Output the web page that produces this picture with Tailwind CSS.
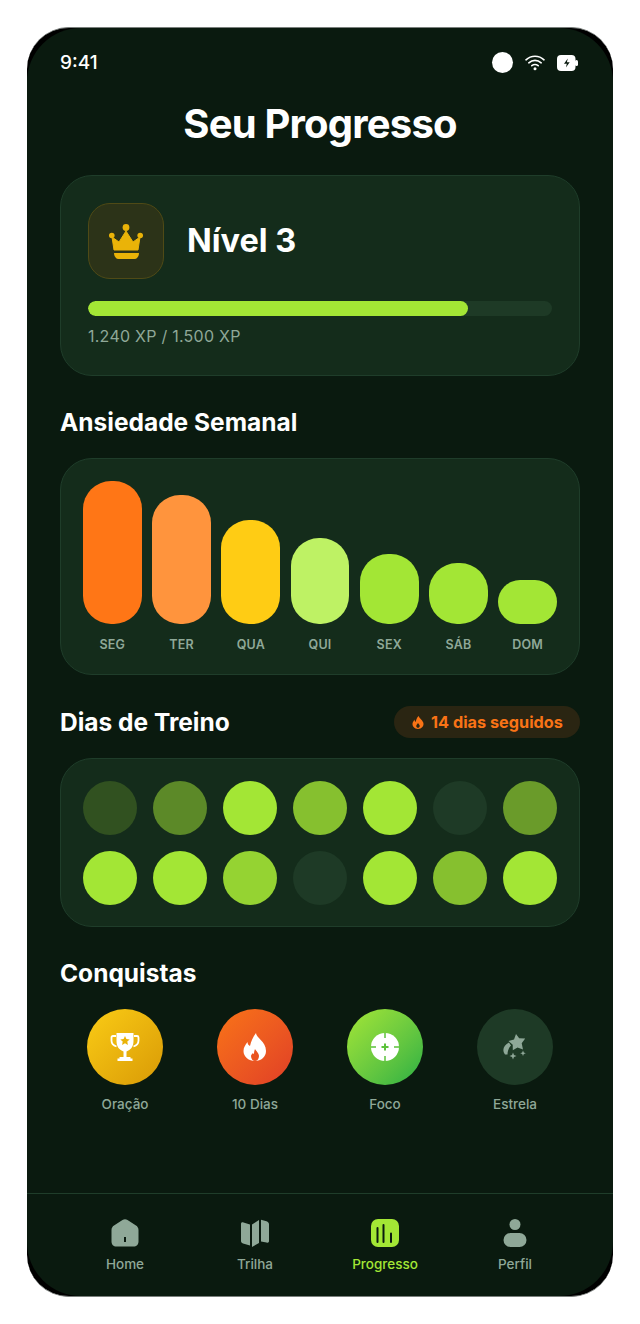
<!DOCTYPE html>
<html lang="pt">
<head>
<meta charset="utf-8">
<script src="https://cdn.jsdelivr.net/npm/@tailwindcss/browser@4"></script>
</head>
<body class="bg-white font-['Inter','Noto_Sans',sans-serif]">
<div class="w-[640px] h-[1324px] p-[27px] bg-white">
  <div class="w-[586px] h-[1270px] bg-black rounded-[42px] overflow-hidden border-y border-[#7a7f7c]">
    <div class="w-[586px] h-[1268px] bg-[#0a1a0f] rounded-[54px] overflow-hidden flex flex-col text-white">

      <div class="h-[69px] pl-[33px] pr-[35px] pt-[23px] flex justify-between items-start">
        <span class="text-[19px] leading-[23px] font-medium">9:41</span>
        <div class="flex items-center gap-[12px] pt-[1px]">
          <div class="w-[21px] h-[21px] rounded-full bg-white"></div>
          <svg class="w-[20px] h-[17px]" viewBox="0 0 20 17" fill="none" stroke="#fff" stroke-width="1.600" stroke-linecap="round"><path d="M1 5.800C6 1 14 1 19 5.800"/><path d="M3.800 8.800C7.500 5.500 12.500 5.500 16.200 8.800"/><path d="M6.800 11.700C8.800 10.200 11.200 10.200 13.200 11.700"/><circle cx="10" cy="14.800" r="1.500" fill="#fff" stroke="none"/></svg>
          <svg class="w-[21px] h-[16px]" viewBox="0 0 21 16"><rect x="0" y="0" width="18.500" height="16" rx="4" fill="#fff"/><rect x="18" y="5" width="3" height="6" rx="1.500" fill="#fff"/><path d="M10.800 3.600 7 8.800h2.800l-.9 3.600 3.800-5.200h-2.800z" fill="#0a1a0f"/></svg>
        </div>
      </div>

      <h1 class="text-center text-[40px] leading-[48px] font-bold tracking-[-0.8px] mt-[3px]">Seu Progresso</h1>

      <div class="mx-[33px] mt-[27px] h-[201px] rounded-[32px] bg-[#142c1b] border border-[#1f3d2a] px-[27px] pt-[27px]">
        <div class="flex items-center gap-[23px]">
          <div class="w-[76px] h-[76px] rounded-[22px] bg-[#2c3318] border border-[#4f4a16] flex items-center justify-center">
            <svg class="w-[36px] h-[36px]" viewBox="0 0 36 36" fill="#eab308"><circle cx="18" cy="4.500" r="3.400"/><circle cx="3.800" cy="12.500" r="2.800"/><circle cx="32.200" cy="12.500" r="2.800"/><path d="M18 8 25 19 32 14 30 27H6L4 14 11 19Z" stroke="#eab308" stroke-linejoin="round"/><path d="M6 30H31C31 33.500 29 36 26.500 36H10.500C8 36 6 33.500 6 30Z"/></svg>
          </div>
          <span class="text-[32.500px] leading-[40px] font-bold">Nível 3</span>
        </div>
        <div class="mt-[22px] h-[15px] rounded-full bg-[#1e3a26] overflow-hidden">
          <div class="h-full w-[82%] rounded-full bg-[#a3e635]"></div>
        </div>
        <p class="mt-[10px] text-[16px] leading-[21px] tracking-[0.25px] text-[#8fa898]">1.240 XP / 1.500 XP</p>
      </div>

      <h2 class="mx-[33px] mt-[31px] text-[24.500px] leading-[30px] font-bold">Ansiedade Semanal</h2>

      <div class="mx-[33px] mt-[21px] h-[217px] rounded-[32px] bg-[#142c1b] border border-[#1f3d2a] px-[22px] grid grid-cols-7 gap-x-[10.500px] items-end pb-[22px]">
        <div class="flex flex-col items-center"><div class="w-full h-[143px] rounded-[28px] bg-[#ff7616]"></div><span class="mt-[13px] text-[12.500px] leading-[15px] font-semibold tracking-[0.2px] text-[#8fa898]">SEG</span></div>
        <div class="flex flex-col items-center"><div class="w-full h-[129px] rounded-[28px] bg-[#ff943d]"></div><span class="mt-[13px] text-[12.500px] leading-[15px] font-semibold tracking-[0.2px] text-[#8fa898]">TER</span></div>
        <div class="flex flex-col items-center"><div class="w-full h-[104px] rounded-[28px] bg-[#ffcc14]"></div><span class="mt-[13px] text-[12.500px] leading-[15px] font-semibold tracking-[0.2px] text-[#8fa898]">QUA</span></div>
        <div class="flex flex-col items-center"><div class="w-full h-[86px] rounded-[28px] bg-[#bef264]"></div><span class="mt-[13px] text-[12.500px] leading-[15px] font-semibold tracking-[0.2px] text-[#8fa898]">QUI</span></div>
        <div class="flex flex-col items-center"><div class="w-full h-[70px] rounded-[28px] bg-[#a3e635]"></div><span class="mt-[13px] text-[12.500px] leading-[15px] font-semibold tracking-[0.2px] text-[#8fa898]">SEX</span></div>
        <div class="flex flex-col items-center"><div class="w-full h-[61px] rounded-[28px] bg-[#a3e635]"></div><span class="mt-[13px] text-[12.500px] leading-[15px] font-semibold tracking-[0.2px] text-[#8fa898]">SÁB</span></div>
        <div class="flex flex-col items-center"><div class="w-full h-[44px] rounded-[22px] bg-[#a3e635]"></div><span class="mt-[13px] text-[12.500px] leading-[15px] font-semibold tracking-[0.2px] text-[#8fa898]">DOM</span></div>
      </div>

      <div class="mx-[33px] mt-[31px] h-[32px] flex items-center justify-between">
        <h2 class="text-[24.500px] leading-[30px] font-bold">Dias de Treino</h2>
        <div class="h-[32px] w-[186px] rounded-full bg-[#2a2512] flex items-center justify-center gap-[6px] text-[#f97316] text-[16.250px] font-bold">
          <svg class="w-[14px] h-[15px]" viewBox="0 0 24 24" fill="#f97316"><path d="M13 1c1 4 6 6 8 11 2 6-3 11-9 11S1 18 3 12c1-2 2-3 3-5 0 2 1 3 2 4 1-4 2-7 5-10Z"/><path d="M12 13c1 2 3 3 3 5 0 2-1.500 3-3 3s-3-1-3-3c0-2 2-3 3-5Z" fill="#2a2512"/></svg>
          <span>14 dias seguidos</span>
        </div>
      </div>

      <div class="mx-[33px] mt-[20px] h-[169px] rounded-[32px] bg-[#142c1b] border border-[#1f3d2a] px-[22px] flex flex-col justify-center gap-y-[16px]">
        <div class="flex justify-between">
          <div class="w-[54px] h-[54px] rounded-full bg-[#a3e635]/20"></div>
          <div class="w-[54px] h-[54px] rounded-full bg-[#a3e635]/50"></div>
          <div class="w-[54px] h-[54px] rounded-full bg-[#a3e635]"></div>
          <div class="w-[54px] h-[54px] rounded-full bg-[#a3e635]/80"></div>
          <div class="w-[54px] h-[54px] rounded-full bg-[#a3e635]"></div>
          <div class="w-[54px] h-[54px] rounded-full bg-[#1e3a26]"></div>
          <div class="w-[54px] h-[54px] rounded-full bg-[#a3e635]/60"></div>
        </div>
        <div class="flex justify-between">
          <div class="w-[54px] h-[54px] rounded-full bg-[#a3e635]"></div>
          <div class="w-[54px] h-[54px] rounded-full bg-[#a3e635]"></div>
          <div class="w-[54px] h-[54px] rounded-full bg-[#a3e635]/90"></div>
          <div class="w-[54px] h-[54px] rounded-full bg-[#1e3a26]"></div>
          <div class="w-[54px] h-[54px] rounded-full bg-[#a3e635]"></div>
          <div class="w-[54px] h-[54px] rounded-full bg-[#a3e635]/80"></div>
          <div class="w-[54px] h-[54px] rounded-full bg-[#a3e635]"></div>
        </div>
      </div>

      <h2 class="mx-[33px] mt-[31px] text-[24.500px] leading-[30px] font-bold">Conquistas</h2>

      <div class="mx-[33px] mt-[21px] grid grid-cols-4">
        <div class="flex flex-col items-center">
          <div class="w-[76px] h-[76px] rounded-full bg-linear-to-br from-[#facc15] to-[#d99a06] flex items-center justify-center">
            <svg class="w-[30px] h-[30px]" viewBox="0 0 30 30" fill="#fff"><path d="M6.500 1h17v8c0 6-3 9-7 10.500V25h-3v-5.500C9.500 18 6.500 15 6.500 9Z"/><path d="M6 4H3c-1 0-1.500.5-1.500 1.500v3c0 3 2 5 5 6" fill="none" stroke="#fff" stroke-width="1.800"/><path d="M24 4h3c1 0 1.500.5 1.500 1.500v3c0 3-2 5-5 6" fill="none" stroke="#fff" stroke-width="1.800"/><path d="M9.500 25h11v1.500h2V29H7.500v-2.500h2Z"/><path d="M15 4l1.400 3 3.300.4-2.400 2.200.6 3.300-2.900-1.600-2.900 1.600.6-3.300-2.400-2.200 3.300-.4Z" fill="#eab308"/></svg>
          </div>
          <span class="mt-[10px] text-[13.500px] leading-[18px] font-medium text-[#8fa898]">Oração</span>
        </div>
        <div class="flex flex-col items-center">
          <div class="w-[76px] h-[76px] rounded-full bg-linear-to-br from-[#f97316] to-[#e03e26] flex items-center justify-center">
            <svg class="w-[30px] h-[30px]" viewBox="0 0 30 30" fill="#fff"><path d="M16 1c0 5 10 8 10 18 0 6-5 10-11 10S3.500 25 3.500 19c0-4 2-6 4-9 0 2 1 3 2.500 4 1-5 3-9 6-13Z"/><path d="M15 17c1 2 4 4 4 7 0 3-2 5-4 5s-4-2-4-5c0-1 1-2 2-3 .2.700.5 1 1 1 0-2 .300-3 1-5Z" fill="#ea5420"/></svg>
          </div>
          <span class="mt-[10px] text-[13.500px] leading-[18px] font-medium text-[#8fa898]">10 Dias</span>
        </div>
        <div class="flex flex-col items-center">
          <div class="w-[76px] h-[76px] rounded-full bg-linear-to-br from-[#a3e635] to-[#22b043] flex items-center justify-center">
            <svg class="w-[28px] h-[28px]" viewBox="0 0 28 28"><circle cx="14" cy="14" r="14" fill="#fff"/><path d="M14 0v5M14 23v5M0 14h5M23 14h5" stroke="#5cc23c" stroke-width="1.500"/><path d="M14 10.500v7M10.500 14h7" stroke="#5cc23c" stroke-width="2"/></svg>
          </div>
          <span class="mt-[10px] text-[13.500px] leading-[18px] font-medium text-[#8fa898]">Foco</span>
        </div>
        <div class="flex flex-col items-center">
          <div class="w-[76px] h-[76px] rounded-full bg-[#1e3a26] flex items-center justify-center">
            <svg class="w-[26px] h-[26px]" viewBox="0 0 26 26" fill="#8fa898"><path d="M14 0l3.200 4.200 6 .3-3.500 4.800 1.300 6.200-5.500-2-4.700 2.800-.1-5.600L6.500 7l5.500-1.500Z"/><path d="M7 8.500 9 11.500c-2 2-3.500 5-3.500 9H3C-.5 16 2 11 7 8.500Z"/><path d="M11 18.500l1 2.500 2.500 1-2.500 1-1 2.500-1-2.500-2.500-1 2.500-1Z"/><path d="M21 16.500l.8 2 2 .8-2 .8-.8 2-.8-2-2-.8 2-.8Z"/></svg>
          </div>
          <span class="mt-[10px] text-[13.500px] leading-[18px] font-medium text-[#8fa898]">Estrela</span>
        </div>
      </div>

      <div class="mt-auto h-[103px] border-t border-[#1f3d2a] px-[33px] grid grid-cols-4 pt-[25px]">
        <div class="flex flex-col items-center">
          <svg class="w-[28px] h-[28px]" viewBox="0 0 28 28" fill="#8fa898"><path d="M11.500 1c1.500-1 3.500-1 5 0l8.500 5.500c1.500 1 2.500 2.500 2.500 4.500v11.500c0 3-2 5-5 5h-17c-3 0-5-2-5-5V11c0-2 1-3.500 2.500-4.500Z"/><rect x="13" y="18" width="2" height="5" fill="#0a1a0f"/></svg>
          <span class="mt-[8px] text-[13.500px] leading-[18px] font-medium text-[#8fa898]">Home</span>
        </div>
        <div class="flex flex-col items-center">
          <svg class="w-[28px] h-[28px]" viewBox="0 0 28 28" fill="#8fa898"><path d="M0 5c0-1.500 1-2 2.500-1.500L9 5.500v21L2 24.500C.7 24 0 23 0 22Z"/><path d="M11 5.500 18 1v23l-7 4Z"/><path d="M20 0.800l5.500 1.500c1.500.5 2.500 1.500 2.500 3V22c0 1.500-1 2-2.500 1.500L20 22.500Z"/></svg>
          <span class="mt-[8px] text-[13.500px] leading-[18px] font-medium text-[#8fa898]">Trilha</span>
        </div>
        <div class="flex flex-col items-center">
          <svg class="w-[28px] h-[28px]" viewBox="0 0 28 28"><rect width="28" height="28" rx="7" fill="#a3e635"/><path d="M6.500 9v14M12.500 6v17M20 14.500v8.500" stroke="#0a1a0f" stroke-width="2" stroke-linecap="round"/></svg>
          <span class="mt-[8px] text-[13.500px] leading-[18px] font-medium text-[#a3e635]">Progresso</span>
        </div>
        <div class="flex flex-col items-center">
          <svg class="w-[28px] h-[28px]" viewBox="0 0 28 28" fill="#8fa898"><circle cx="14" cy="5.500" r="5.500"/><rect x="2.500" y="14" width="23" height="14" rx="7"/></svg>
          <span class="mt-[8px] text-[13.500px] leading-[18px] font-medium text-[#8fa898]">Perfil</span>
        </div>
      </div>

    </div>
  </div>
</div>
</body>
</html>
